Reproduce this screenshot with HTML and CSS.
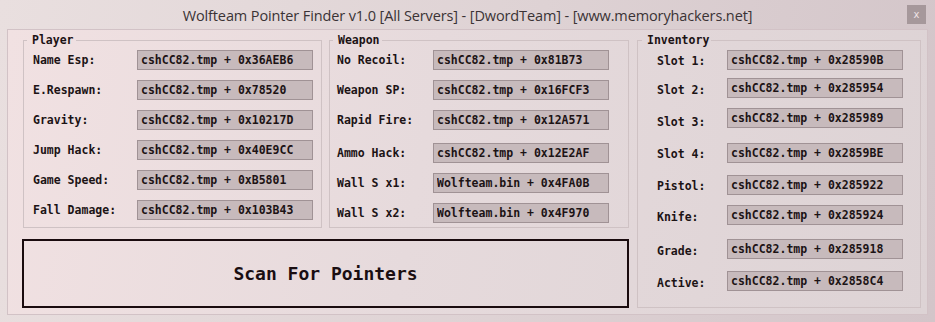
FILE: index.html
```html
<!DOCTYPE html>
<html lang="en">
<head>
    <meta charset="UTF-8">
    <meta name="viewport" content="width=device-width, initial-scale=1.0">
    <title>Wolfteam Pointer Finder v1.0</title>
    <link rel="stylesheet" href="styles.css">
</head>
<body>
    <div class="window">
        <div class="titlebar">
            <span></span>
            <span class="title">Wolfteam Pointer Finder v1.0 [All Servers] - [DwordTeam] - [www.memoryhackers.net]</span>
            <button class="close">x</button>
        </div>

        <div class="panel">
            <fieldset class="group player">
                <legend>Player</legend>
                <div class="row"><label>Name Esp:</label><input type="text" value="cshCC82.tmp + 0x36AEB6" readonly></div>
                <div class="row"><label>E.Respawn:</label><input type="text" value="cshCC82.tmp + 0x78520" readonly></div>
                <div class="row"><label>Gravity:</label><input type="text" value="cshCC82.tmp + 0x10217D" readonly></div>
                <div class="row"><label>Jump Hack:</label><input type="text" value="cshCC82.tmp + 0x40E9CC" readonly></div>
                <div class="row"><label>Game Speed:</label><input type="text" value="cshCC82.tmp + 0xB5801" readonly></div>
                <div class="row"><label>Fall Damage:</label><input type="text" value="cshCC82.tmp + 0x103B43" readonly></div>
            </fieldset>

            <fieldset class="group weapon">
                <legend>Weapon</legend>
                <div class="row"><label>No Recoil:</label><input type="text" value="cshCC82.tmp + 0x81B73" readonly></div>
                <div class="row"><label>Weapon SP:</label><input type="text" value="cshCC82.tmp + 0x16FCF3" readonly></div>
                <div class="row"><label>Rapid Fire:</label><input type="text" value="cshCC82.tmp + 0x12A571" readonly></div>
                <div class="row"><label>Ammo Hack:</label><input type="text" value="cshCC82.tmp + 0x12E2AF" readonly></div>
                <div class="row"><label>Wall S x1:</label><input type="text" value="Wolfteam.bin + 0x4FA0B" readonly></div>
                <div class="row"><label>Wall S x2:</label><input type="text" value="Wolfteam.bin + 0x4F970" readonly></div>
            </fieldset>

            <fieldset class="group inventory">
                <legend>Inventory</legend>
                <div class="row"><label>Slot 1:</label><input type="text" value="cshCC82.tmp + 0x28590B" readonly></div>
                <div class="row"><label>Slot 2:</label><input type="text" value="cshCC82.tmp + 0x285954" readonly></div>
                <div class="row"><label>Slot 3:</label><input type="text" value="cshCC82.tmp + 0x285989" readonly></div>
                <div class="row"><label>Slot 4:</label><input type="text" value="cshCC82.tmp + 0x2859BE" readonly></div>
                <div class="row"><label>Pistol:</label><input type="text" value="cshCC82.tmp + 0x285922" readonly></div>
                <div class="row"><label>Knife:</label><input type="text" value="cshCC82.tmp + 0x285924" readonly></div>
                <div class="row"><label>Grade:</label><input type="text" value="cshCC82.tmp + 0x285918" readonly></div>
                <div class="row"><label>Active:</label><input type="text" value="cshCC82.tmp + 0x2858C4" readonly></div>
            </fieldset>

            <button class="scan">Scan For Pointers</button>
        </div>
    </div>
</body>
</html>
```

FILE: styles.css
```css
body {
    margin: 0;
    padding: 0;
    font-family: "DejaVu Sans Mono", monospace;
    color: #1c1315;
}
.window {
    width: 935px;
    height: 322px;
    box-sizing: border-box;
    background: linear-gradient(100deg, #e9dfdf 0%, #ded2d4 55%, #d3c5c9 100%);
}
.titlebar {
    height: 29px;
    display: grid;
    grid-template-columns: 1fr auto 1fr;
    align-items: center;
}
.title {
    font-family: "Open Sans", "Noto Sans", sans-serif;
    font-size: 14.5px;
    color: #3a3335;
    letter-spacing: -0.12px;
    padding-top: 1px;
}
.close {
    justify-self: end;
    margin-right: 9px;
    width: 19px;
    height: 19px;
    padding: 0;
    border: none;
    background: #a6989b;
    color: #efe3e5;
    font-family: "DejaVu Sans", sans-serif;
    font-size: 10px;
    line-height: 17px;
}
.panel {
    margin: 0 7px;
    height: 286px;
    box-sizing: border-box;
    border: 1px solid #d2c2c6;
    background: linear-gradient(100deg, #f1e1e2 0%, #e6dadc 45%, #ddd3d5 100%);
    padding: 3px 5px 6px 15px;
    display: grid;
    grid-template-columns: 299px 300px 285px;
    grid-template-rows: 195px 69px;
    column-gap: 7px;
    row-gap: 11px;
}
.group {
    margin: 0;
    padding: 0 0 0 9px;
    border: 1px solid #cfc2c4;
    border-radius: 0;
    min-width: 0;
    display: flex;
    flex-direction: column;
}
.group legend {
    font-weight: bold;
    font-size: 11.5px;
    line-height: 14px;
    padding: 0 2px 0 5px;
    margin-left: -6px;
}
.row {
    display: grid;
    align-items: center;
    height: 20px;
    margin-top: 10px;
}
.row:first-of-type {
    margin-top: 3px;
}
.row label {
    font-weight: bold;
    font-size: 11.5px;
}
.row input {
    width: 176px;
    height: 20px;
    box-sizing: border-box;
    margin: 0;
    padding: 0 0 0 3px;
    border: 1px solid #a09295;
    background: #c7babc;
    color: #1c1315;
    font-family: "DejaVu Sans Mono", monospace;
    font-weight: bold;
    font-size: 11.5px;
    outline: none;
}
.player .row {
    grid-template-columns: 104px 176px;
}
.weapon {
    padding-left: 7px;
}
.weapon legend {
    margin-left: -4px;
}
.weapon .row {
    grid-template-columns: 96px 176px;
}
.weapon .row:nth-of-type(4) {
    margin-top: 13px;
}
.inventory {
    grid-row: 1 / 3;
    grid-column: 3;
    margin-left: 1px;
    padding-left: 19px;
}
.inventory legend {
    margin-left: -15px;
}
.inventory .row {
    grid-template-columns: 70px 176px;
}
.inventory .row label {
    position: relative;
    top: 1px;
}
.inventory .row:nth-of-type(2) { margin-top: 8px; }
.inventory .row:nth-of-type(2) label { top: 2px; }
.inventory .row:nth-of-type(3) label { top: 4px; }
.inventory .row:nth-of-type(4) { margin-top: 15px; }
.inventory .row:nth-of-type(5) { margin-top: 12px; }
.inventory .row:nth-of-type(6) label { top: 2px; }
.inventory .row:nth-of-type(7) { margin-top: 14px; }
.inventory .row:nth-of-type(7) label,
.inventory .row:nth-of-type(8) label { top: 2px; }
.inventory .row:nth-of-type(8) { margin-top: 12px; }
.scan {
    grid-row: 2;
    grid-column: 1 / 3;
    margin-left: -1px;
    border: 2px solid #1a0b0e;
    background: transparent;
    font-family: "DejaVu Sans Mono", monospace;
    font-weight: bold;
    font-size: 18px;
    color: #1a0e12;
    padding: 0;
}
```
